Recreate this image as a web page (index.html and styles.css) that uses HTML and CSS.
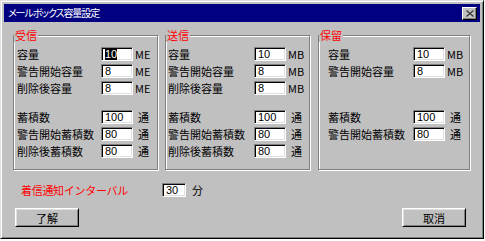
FILE: index.html
```html
<!DOCTYPE html>
<html lang="ja">
<head>
    <meta charset="UTF-8" />
    <title>メールボックス容量設定</title>
    <link rel="stylesheet" href="styles.css">
</head>
<body>
    <div class="window">
        <div class="titlebar">
            <span class="title">メールボックス容量設定</span>
            <span class="close">
                <svg width="8" height="7" viewBox="0 0 8 7">
                    <path d="M0.5 0.5 L7.5 6.5 M7.5 0.5 L0.5 6.5" stroke="#333" stroke-width="1.1" fill="none" />
                </svg>
            </span>
        </div>

        <div class="groups">
            <div class="group g1">
                <span class="legend">受信</span>
                <div class="row"><span class="label">容量</span><span class="field"><span class="sel">10</span></span><span class="unit">ME</span></div>
                <div class="row"><span class="label">警告開始容量</span><span class="field">8</span><span class="unit">ME</span></div>
                <div class="row"><span class="label">削除後容量</span><span class="field">8</span><span class="unit">ME</span></div>
                <div class="row spaced"><span class="label">蓄積数</span><span class="field">100</span><span class="unit tsu">通</span></div>
                <div class="row"><span class="label">警告開始蓄積数</span><span class="field">80</span><span class="unit tsu">通</span></div>
                <div class="row"><span class="label">削除後蓄積数</span><span class="field">80</span><span class="unit tsu">通</span></div>
            </div>

            <div class="group g2">
                <span class="legend">送信</span>
                <div class="row"><span class="label">容量</span><span class="field">10</span><span class="unit">MB</span></div>
                <div class="row"><span class="label">警告開始容量</span><span class="field">8</span><span class="unit">MB</span></div>
                <div class="row"><span class="label">削除後容量</span><span class="field">8</span><span class="unit">MB</span></div>
                <div class="row spaced"><span class="label">蓄積数</span><span class="field">100</span><span class="unit tsu">通</span></div>
                <div class="row"><span class="label">警告開始蓄積数</span><span class="field">80</span><span class="unit tsu">通</span></div>
                <div class="row"><span class="label">削除後蓄積数</span><span class="field">80</span><span class="unit tsu">通</span></div>
            </div>

            <div class="group g3">
                <span class="legend">保留</span>
                <div class="row"><span class="label">容量</span><span class="field">10</span><span class="unit">MB</span></div>
                <div class="row"><span class="label">警告開始容量</span><span class="field">8</span><span class="unit">MB</span></div>
                <div class="row spaced-wide"><span class="label">蓄積数</span><span class="field">100</span><span class="unit tsu">通</span></div>
                <div class="row"><span class="label">警告開始蓄積数</span><span class="field">80</span><span class="unit tsu">通</span></div>
            </div>
        </div>

        <div class="interval">
            <span class="interval-label">着信通知インターバル</span>
            <span class="field small">30</span>
            <span class="unit">分</span>
        </div>

        <div class="buttons">
            <button type="button">了解</button>
            <button type="button">取消</button>
        </div>
    </div>
</body>
</html>
```

FILE: styles.css
```css
* {
    box-sizing: border-box;
}

body {
    margin: 0;
    background: #fff;
    font-family: "Noto Sans CJK JP", "DejaVu Sans", sans-serif;
    font-size: 11px;
    color: #000;
}

.window {
    width: 484px;
    height: 239px;
    background: #c0c0c0;
    border: 1px solid;
    border-color: #dfdfdf #000 #000 #dfdfdf;
    box-shadow: inset 1px 1px #fff, inset -1px -1px #808080;
    padding: 3px;
}

.titlebar {
    height: 18px;
    background: #000080;
    display: flex;
    align-items: center;
    justify-content: space-between;
    padding: 0 3px 0 4px;
}

.title {
    color: #fff;
    font-size: 10px;
    letter-spacing: -1.1px;
    font-feature-settings: "palt";
    line-height: 18px;
}

.close {
    width: 15px;
    height: 13px;
    background: #c0c0c0;
    border: 1px solid;
    border-color: #fff #000 #000 #fff;
    box-shadow: inset -1px -1px #808080;
    display: flex;
    align-items: center;
    justify-content: center;
}

.groups {
    display: flex;
    gap: 7px;
    margin: 13px 0 0 9px;
}

.group {
    position: relative;
    height: 135px;
    border: 1px solid #808080;
    box-shadow: inset 1px 1px #fff, 1px 1px #fff;
    padding-top: 11px;
}

.g1 {
    width: 145px;
    padding-left: 3px;
    --label: 84px;
}

.g2 {
    width: 145px;
    padding-left: 2px;
    --label: 86px;
}

.g3 {
    width: 152px;
    margin-left: 1px;
    padding-left: 9px;
    --label: 85px;
}

/* ラベルは枠線の上に重ねる */
.legend {
    position: absolute;
    top: -8px;
    left: 0;
    padding: 0 1px;
    background: #c0c0c0;
    color: #ff0000;
    line-height: 14px;
}

.row {
    display: flex;
    align-items: center;
    height: 14px;
    margin-bottom: 3px;
}

.row.spaced {
    margin-top: 15px;
}

.row.spaced-wide {
    margin-top: 32px;
}

.label {
    width: var(--label);
    line-height: 14px;
    white-space: nowrap;
}

.field {
    width: 32px;
    height: 14px;
    background: #fff;
    border: 1px solid;
    border-color: #808080 #fff #fff #808080;
    box-shadow: inset 1px 1px #000, inset -1px -1px #dfdfdf;
    padding-left: 3px;
    line-height: 12px;
    font-family: "Liberation Sans", sans-serif;
    font-size: 11px;
}

.field.small {
    width: 24px;
}

.sel {
    background: #000;
    color: #fff;
}

.unit {
    padding-left: 2px;
    line-height: 14px;
}

.unit.tsu {
    padding-left: 5px;
}

.interval {
    display: flex;
    align-items: center;
    height: 14px;
    margin: 13px 0 0 17px;
}

.interval-label {
    width: 141px;
    color: #ff0000;
    font-size: 11px;
    letter-spacing: -0.3px;
}

.interval .unit {
    padding-left: 6px;
}

.buttons {
    display: flex;
    justify-content: space-between;
    margin: 11px 14px 0 11px;
}

button {
    width: 64px;
    height: 19px;
    padding: 0;
    background: #c0c0c0;
    border: 1px solid;
    border-color: #fff #000 #000 #fff;
    box-shadow: inset 1px 1px #dfdfdf, inset -1px -1px #808080;
    font-family: "Noto Sans CJK JP", sans-serif;
    font-size: 11px;
    color: #000;
}
```
